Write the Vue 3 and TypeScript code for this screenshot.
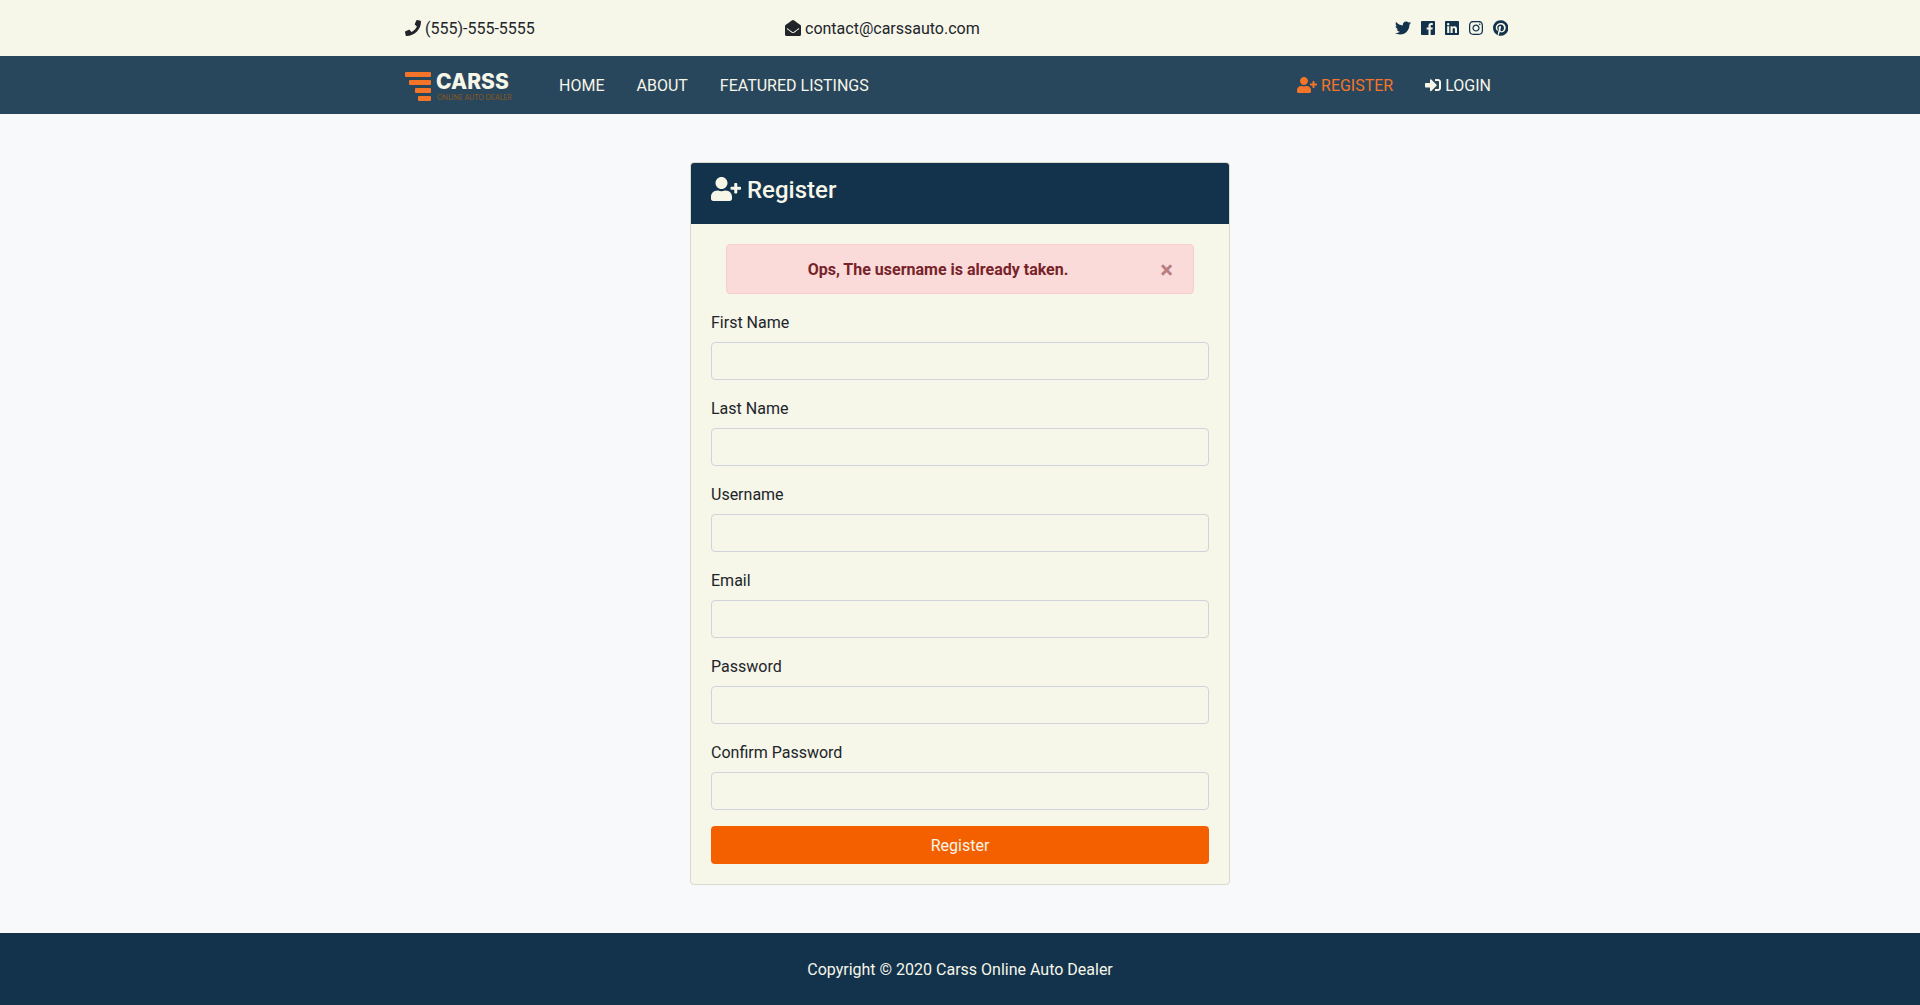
<script setup lang="ts">
import { reactive, ref } from 'vue'

interface Glyph {
  box: string
  path: string
}

interface Field {
  id: string
  label: string
  type: string
}

const phone: Glyph = {
  box: '0 0 512 512',
  path: 'M493.4 24.6l-104-24c-11.3-2.6-22.9 3.3-27.5 13.9l-48 112c-4.2 9.8-1.4 21.3 6.9 28l60.6 49.6c-36 76.7-98.9 140.5-177.2 177.2l-49.6-60.6c-6.8-8.3-18.2-11.1-28-6.9l-112 48C3.9 366.5-2 378.1.6 389.4l24 104C27.1 504.2 36.7 512 48 512c256.1 0 464-207.5 464-464 0-11.2-7.7-20.9-18.6-23.4z',
}
const envelope: Glyph = {
  box: '0 0 512 512',
  path: 'M512 464c0 26.51-21.49 48-48 48H48c-26.51 0-48-21.49-48-48V200.724a48 48 0 0 1 18.387-37.776c24.913-19.529 45.501-35.365 164.2-121.511C199.412 29.17 232.797-.347 256 .003c23.198-.354 56.596 29.172 73.413 41.433 118.687 86.137 139.303 101.995 164.2 121.512A48 48 0 0 1 512 200.724V464zm-65.666-196.605c-2.563-3.728-7.7-4.595-11.339-1.907-22.845 16.873-55.462 40.705-105.582 77.079-16.825 12.266-50.21 41.781-73.413 41.43-23.211.344-56.559-29.143-73.413-41.43-50.114-36.37-82.734-60.204-105.582-77.079-3.639-2.688-8.776-1.821-11.339 1.907l-9.072 13.196a7.998 7.998 0 0 0 1.839 10.967c22.887 16.899 55.454 40.69 105.303 76.868 20.274 14.781 56.524 47.813 92.264 47.573 35.724.242 71.961-32.771 92.263-47.573 49.85-36.179 82.418-59.97 105.303-76.868a7.998 7.998 0 0 0 1.839-10.967l-9.071-13.196z',
}
const userPlus: Glyph = {
  box: '0 0 640 512',
  path: 'M624 208h-64v-64c0-8.8-7.2-16-16-16h-32c-8.8 0-16 7.2-16 16v64h-64c-8.8 0-16 7.2-16 16v32c0 8.8 7.2 16 16 16h64v64c0 8.8 7.2 16 16 16h32c8.8 0 16-7.2 16-16v-64h64c8.8 0 16-7.2 16-16v-32c0-8.8-7.2-16-16-16zm-400 48c70.7 0 128-57.3 128-128S294.7 0 224 0 96 57.3 96 128s57.3 128 128 128zm89.6 32h-16.7c-22.2 10.2-46.9 16-72.9 16s-50.6-5.8-72.9-16h-16.7C60.2 288 0 348.2 0 422.4V464c0 26.5 21.5 48 48 48h352c26.5 0 48-21.5 48-48v-41.6c0-74.2-60.2-134.4-134.4-134.4z',
}
const signIn: Glyph = {
  box: '0 0 512 512',
  path: 'M416 448h-84c-6.6 0-12-5.4-12-12v-40c0-6.6 5.4-12 12-12h84c17.7 0 32-14.3 32-32V160c0-17.7-14.3-32-32-32h-84c-6.6 0-12-5.4-12-12V76c0-6.6 5.4-12 12-12h84c53 0 96 43 96 96v192c0 53-43 96-96 96zm-47-201L201 79c-15-15-41-4.5-41 17v96H24c-13.3 0-24 10.7-24 24v96c0 13.3 10.7 24 24 24h136v96c0 21.5 26 32 41 17l168-168c9.3-9.4 9.3-24.6 0-34z',
}

const socials: (Glyph & { name: string })[] = [
  {
    name: 'Twitter',
    box: '0 0 512 512',
    path: 'M459.37 151.716c.325 4.548.325 9.097.325 13.645 0 138.72-105.583 298.558-298.558 298.558-59.452 0-114.68-17.219-161.137-47.106 8.447.974 16.568 1.299 25.34 1.299 49.055 0 94.213-16.568 130.274-44.832-46.132-.975-84.792-31.188-98.112-72.772 6.498.974 12.995 1.624 19.818 1.624 9.421 0 18.843-1.3 27.614-3.573-48.081-9.747-84.143-51.98-84.143-102.985v-1.299c13.969 7.797 30.214 12.67 47.431 13.319-28.264-18.843-46.781-51.005-46.781-87.391 0-19.492 5.197-37.36 14.294-52.954 51.655 63.675 129.3 105.258 216.365 109.807-1.624-7.797-2.599-15.918-2.599-24.04 0-57.828 46.782-104.934 104.934-104.934 30.213 0 57.502 12.67 76.67 33.137 23.715-4.548 46.456-13.32 66.599-25.34-7.798 24.366-24.366 44.833-46.132 57.827 21.117-2.273 41.584-8.122 60.426-16.243-14.292 20.791-32.161 39.308-52.628 54.253z',
  },
  {
    name: 'Facebook',
    box: '0 0 448 512',
    path: 'M448 56.7v398.5c0 13.7-11.1 24.7-24.7 24.7H309.1V306.5h58.2l8.7-67.6h-67v-43.2c0-19.6 5.4-32.9 33.5-32.9h35.8v-60.5c-6.2-.8-27.4-2.7-52.2-2.7-51.6 0-87 31.5-87 89.4v49.9h-58.4v67.6h58.4V480H24.7C11.1 480 0 468.9 0 455.3V56.7C0 43.1 11.1 32 24.7 32h398.5c13.7 0 24.8 11.1 24.8 24.7z',
  },
  {
    name: 'LinkedIn',
    box: '0 0 448 512',
    path: 'M416 32H31.9C14.3 32 0 46.5 0 64.3v383.4C0 465.5 14.3 480 31.9 480H416c17.6 0 32-14.5 32-32.3V64.3c0-17.8-14.4-32.3-32-32.3zM135.4 416H69V202.2h66.5V416zm-33.2-243c-21.3 0-38.5-17.3-38.5-38.5S80.9 96 102.2 96c21.2 0 38.5 17.3 38.5 38.5 0 21.3-17.2 38.5-38.5 38.5zm282.1 243h-66.4V312c0-24.8-.5-56.7-34.5-56.7-34.6 0-39.9 27-39.9 54.9V416h-66.4V202.2h63.7v29.2h.9c8.9-16.8 30.6-34.5 62.9-34.5 67.2 0 79.7 44.3 79.7 101.9V416z',
  },
  {
    name: 'Instagram',
    box: '0 0 448 512',
    path: 'M224.1 141c-63.6 0-114.9 51.3-114.9 114.9s51.3 114.9 114.9 114.9S339 319.5 339 255.9 287.7 141 224.1 141zm0 189.6c-41.1 0-74.7-33.5-74.7-74.7s33.5-74.7 74.7-74.7 74.7 33.5 74.7 74.7-33.6 74.7-74.7 74.7zm146.4-194.3c0 14.9-12 26.8-26.8 26.8-14.9 0-26.8-12-26.8-26.8s12-26.8 26.8-26.8 26.8 12 26.8 26.8zm76.1 27.2c-1.7-35.9-9.9-67.7-36.2-93.9-26.2-26.2-58-34.4-93.9-36.2-37-2.1-147.9-2.1-184.9 0-35.8 1.7-67.6 9.9-93.9 36.1s-34.4 58-36.2 93.9c-2.1 37-2.1 147.9 0 184.9 1.7 35.9 9.9 67.7 36.2 93.9s58 34.4 93.9 36.2c37 2.1 147.9 2.1 184.9 0 35.9-1.7 67.7-9.9 93.9-36.2 26.2-26.2 34.4-58 36.2-93.9 2.1-37 2.1-147.8 0-184.8zM398.8 388c-7.8 19.6-22.9 34.7-42.6 42.6-29.5 11.7-99.5 9-132.1 9s-102.7 2.6-132.1-9c-19.6-7.8-34.7-22.9-42.6-42.6-11.7-29.5-9-99.5-9-132.1s-2.6-102.7 9-132.1c7.8-19.6 22.9-34.7 42.6-42.6 29.5-11.7 99.5-9 132.1-9s102.7-2.6 132.1 9c19.6 7.8 34.7 22.9 42.6 42.6 11.7 29.5 9 99.5 9 132.1s2.7 102.7-9 132.1z',
  },
  {
    name: 'Pinterest',
    box: '0 0 496 512',
    path: 'M496 256c0 137-111 248-248 248-25.6 0-50.2-3.9-73.4-11.1 10.1-16.5 25.2-43.5 30.8-65 3-11.6 15.4-59 15.4-59 8.1 15.4 31.7 28.5 56.8 28.5 74.8 0 128.7-68.8 128.7-154.3 0-81.9-66.9-143.2-152.9-143.2-107 0-163.9 71.8-163.9 150.1 0 36.4 19.4 81.7 50.3 96.1 4.7 2.2 7.2 1.2 8.3-3.3.8-3.4 5-20.3 6.9-28.1.6-2.5.3-4.7-1.7-7.1-10.1-12.5-18.3-35.3-18.3-56.6 0-54.7 41.4-107.6 112-107.6 60.9 0 103.6 41.5 103.6 100.9 0 67.1-33.9 113.6-78 113.6-24.3 0-42.6-20.1-36.7-44.8 7-29.5 20.5-61.3 20.5-82.6 0-19-10.2-34.9-31.4-34.9-24.9 0-44.9 25.7-44.9 60.2 0 22 7.4 36.8 7.4 36.8s-24.5 103.8-29 123.2c-5 21.4-3 51.6-.9 71.2C65.4 450.9 0 361.1 0 256 0 119 111 8 248 8s248 111 248 248z',
  },
]

const links: string[] = ['Home', 'About', 'Featured Listings']

const fields: Field[] = [
  { id: 'first_name', label: 'First Name', type: 'text' },
  { id: 'last_name', label: 'Last Name', type: 'text' },
  { id: 'username', label: 'Username', type: 'text' },
  { id: 'email', label: 'Email', type: 'email' },
  { id: 'password', label: 'Password', type: 'password' },
  { id: 'password2', label: 'Confirm Password', type: 'password' },
]

const form = reactive<Record<string, string>>({})
const alertOpen = ref<boolean>(true)
</script>

<template>
  <div class="page">
    <div class="topbar">
      <div class="container topbar-row">
        <div class="contact">
          <svg class="icon" :viewBox="phone.box" aria-hidden="true"><path :d="phone.path" /></svg>
          <span>(555)-555-5555</span>
        </div>
        <div class="contact">
          <svg class="icon" :viewBox="envelope.box" aria-hidden="true"><path :d="envelope.path" /></svg>
          <span>contact@carssauto.com</span>
        </div>
        <div class="socials">
          <a v-for="s in socials" :key="s.name" href="#" :aria-label="s.name">
            <svg class="icon" :viewBox="s.box" aria-hidden="true"><path :d="s.path" /></svg>
          </a>
        </div>
      </div>
    </div>

    <nav class="navbar">
      <div class="container navbar-row">
        <a class="brand" href="#">
          <svg class="brand-mark" viewBox="0 0 26 30" aria-hidden="true">
            <rect x="0" y="0" width="26" height="5" rx="1" />
            <rect x="4" y="8" width="22" height="5" rx="1" />
            <rect x="10" y="16" width="16" height="5" rx="1" />
            <rect x="13" y="24" width="13" height="5" rx="1" />
          </svg>
          <span class="brand-text">
            <span class="brand-name">CARSS</span>
            <span class="brand-tag">ONLINE AUTO DEALER</span>
          </span>
        </a>
        <ul class="menu">
          <li v-for="l in links" :key="l"><a href="#">{{ l }}</a></li>
        </ul>
        <ul class="menu account">
          <li>
            <a href="#" class="active">
              <svg class="icon" :viewBox="userPlus.box" aria-hidden="true"><path :d="userPlus.path" /></svg>
              <span>Register</span>
            </a>
          </li>
          <li>
            <a href="#">
              <svg class="icon" :viewBox="signIn.box" aria-hidden="true"><path :d="signIn.path" /></svg>
              <span>Login</span>
            </a>
          </li>
        </ul>
      </div>
    </nav>

    <main class="container main">
      <section class="card">
        <header class="card-header">
          <h1>
            <svg class="icon" :viewBox="userPlus.box" aria-hidden="true"><path :d="userPlus.path" /></svg>
            <span>Register</span>
          </h1>
        </header>
        <div class="card-body">
          <div v-if="alertOpen" class="alert" role="alert">
            <strong>Ops, The username is already taken.</strong>
            <button type="button" class="close" aria-label="Close" @click="alertOpen = false">×</button>
          </div>
          <form class="form" @submit.prevent>
            <div v-for="f in fields" :key="f.id" class="group">
              <label :for="f.id">{{ f.label }}</label>
              <input :id="f.id" v-model="form[f.id]" :type="f.type" :name="f.id" />
            </div>
            <button type="submit" class="submit">Register</button>
          </form>
        </div>
      </section>
    </main>

    <footer class="footer">Copyright © 2020 Carss Online Auto Dealer</footer>
  </div>
</template>

<style>
body {
  background: #f8f9fb;
}
</style>

<style scoped>
.page,
.page * {
  box-sizing: border-box;
}
.page {
  display: flex;
  flex-direction: column;
  min-height: 100vh;
  font-family: Roboto, sans-serif;
  font-size: 16px;
  line-height: 26px;
  color: #212529;
}
.page a {
  color: inherit;
  text-decoration: none;
}
.container {
  width: 100%;
  max-width: 1140px;
  margin: 0 auto;
  padding: 0 15px;
}
.icon {
  display: block;
  height: 1em;
  margin-bottom: 2px;
  fill: currentColor;
}

.topbar {
  padding: 16px 0 14px;
  background: #f6f6e9;
}
.topbar-row {
  display: grid;
  grid-template-columns: repeat(3, 1fr);
  gap: 30px;
}
.contact {
  display: flex;
  align-items: center;
  gap: 4px;
}
.socials {
  display: flex;
  align-items: center;
  justify-content: flex-end;
  gap: 10px;
  padding-right: 7px;
  color: #13334c;
}

.navbar {
  background: #29475c;
  color: #f6f6e9;
}
.navbar-row {
  display: flex;
  align-items: center;
  min-height: 58px;
}
.brand {
  display: flex;
  gap: 5px;
  margin-right: 43px;
  padding-top: 4px;
}
.brand-mark {
  width: 26px;
  height: 30px;
  fill: #f47529;
}
.brand-text {
  display: flex;
  flex-direction: column;
  width: 72px;
  font-family: Inter, sans-serif;
  white-space: nowrap;
}
.brand-name {
  font-size: 21px;
  font-weight: 800;
  line-height: 20px;
}
.brand-tag {
  padding-left: 1px;
  color: #86561f;
  font-family: Lato, sans-serif;
  font-size: 7px;
  line-height: 10px;
}
.menu {
  display: flex;
  gap: 16px;
  margin: 0;
  padding: 0;
  list-style: none;
  text-transform: uppercase;
}
.menu a {
  display: flex;
  align-items: center;
  gap: 4px;
  padding: 10px 8px 8px;
}
.menu a.active {
  color: #f47529;
}
.account {
  margin-left: auto;
  padding-right: 16px;
}

.main {
  flex: 1;
  padding-top: 48px;
  padding-bottom: 48px;
}
.card {
  width: 100%;
  max-width: 540px;
  margin: 0 auto;
  overflow: hidden;
  background: #f6f6e9;
  border: 1px solid #d8d8cd;
  border-radius: 4px;
}
.card-header {
  padding: 12px 20px 18px;
  background: #13334c;
  color: #f6f6e9;
}
.card-header h1 {
  display: flex;
  align-items: center;
  gap: 6px;
  margin: 0;
  font-size: 24px;
  font-weight: 500;
  line-height: 31px;
}
.card-header .icon {
  margin-bottom: 4px;
}
.card-body {
  padding: 20px;
}
.alert {
  display: flex;
  align-items: center;
  margin: 0 15px 16px;
  padding: 12px 0 10px 20px;
  background: #fadbd9;
  border: 1px solid #f8cdcd;
  border-radius: 4px;
  color: #78222a;
  text-align: center;
}
.alert strong {
  flex: 1;
  font-weight: 700;
}
.close {
  width: 64px;
  padding: 0 20px 0 0;
  background: none;
  border: 0;
  color: #78222a;
  font: 700 24px/26px Roboto, sans-serif;
  text-align: right;
  opacity: 0.5;
  cursor: pointer;
}
.form {
  display: flex;
  flex-direction: column;
  gap: 16px;
}
.group {
  display: flex;
  flex-direction: column;
  gap: 6px;
}
.group input {
  height: 38px;
  padding: 6px 12px;
  background: transparent;
  border: 1px solid #ced4da;
  border-radius: 4px;
  color: #495057;
  font: inherit;
}
.submit {
  padding: 7px 12px 5px;
  background: #f46000;
  border: 0;
  border-radius: 4px;
  color: #f6f6e9;
  font: inherit;
  cursor: pointer;
}

.footer {
  padding: 24px 24px 22px;
  background: #13334c;
  color: #f6f6e9;
  text-align: center;
}
</style>
